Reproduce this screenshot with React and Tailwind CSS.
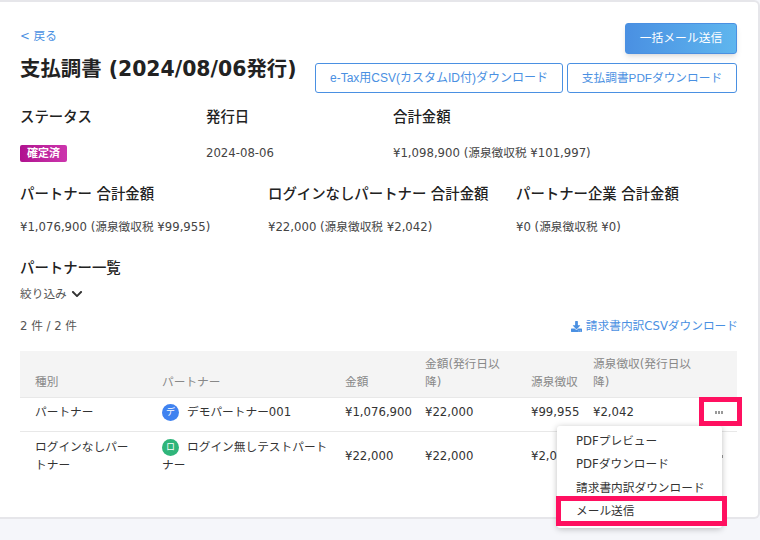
import React from "react";
import { FaChevronDown, FaDownload } from "react-icons/fa";

const font = "font-['DejaVu_Sans','Noto_Sans_CJK_JP',sans-serif]";

const Summary = ({ label, value, className, gap }) => (
  <div className={className}>
    <div className="text-[14.4px] font-medium leading-5 text-[#222]">{label}</div>
    <div className={`${gap} text-[11.7px] leading-5 text-[#444]`}>{value}</div>
  </div>
);

const Dots = () => (
  <div className="flex justify-center gap-px">
    <span className="h-[3px] w-[2px] bg-[#999]" />
    <span className="h-[3px] w-[2px] bg-[#999]" />
    <span className="h-[3px] w-[2px] bg-[#999]" />
  </div>
);

const menuItems = ["PDFプレビュー", "PDFダウンロード", "請求書内訳ダウンロード", "メール送信"];

const App = () => {
  return (
    <div className={`${font} relative h-[540px] w-[760px] overflow-hidden bg-[#f5f6fa]`}>
      <div className="h-[519px] rounded-r-md border-t-2 border-b-2 border-r-2 border-[#e6e6ea] bg-white pl-5 pr-[21px] pt-[21px]">
        <div className="flex items-start justify-between">
          <div>
            <a className="mt-[3px] block text-[11.7px] leading-5 text-[#4a90e2]">&lt; 戻る</a>
            <h1 className="mt-[11px] text-[20.4px] font-bold leading-6 text-[#222]">支払調書 (2024/08/06発行)</h1>
          </div>
          <div className="flex flex-col items-end font-['Liberation_Sans','Noto_Sans_CJK_JP',sans-serif]">
            <button className="h-[31px] w-[112px] rounded-[3px] border border-[#4a90e2] bg-gradient-to-r from-[#4a90e2] to-[#5fb6ee] text-[11.8px] text-white shadow-md">
              一括メール送信
            </button>
            <div className="mt-[9px] flex gap-1">
              <button className="h-[30px] w-[248px] rounded-[3px] border border-[#4a90e2] text-xs text-[#4a90e2]">
                e-Tax用CSV(カスタムID付)ダウンロード
              </button>
              <button className="h-[30px] w-[170px] rounded-[3px] border border-[#4a90e2] text-[11.7px] text-[#4a90e2]">
                支払調書PDFダウンロード
              </button>
            </div>
          </div>
        </div>

        <div className="mt-[14px] flex">
          <Summary gap="mt-[16px]" className="w-[186px]" label="ステータス" value={<span className="inline-block rounded-[2px] bg-gradient-to-r from-[#b0108f] to-[#cc35ad] px-[7px] text-[11px] font-bold leading-[17px] text-white">確定済</span>} />
          <Summary gap="mt-[16px]" className="w-[187px]" label="発行日" value="2024-08-06" />
          <Summary gap="mt-[16px]" label="合計金額" value="¥1,098,900 (源泉徴収税 ¥101,997)" />
        </div>

        <div className="mt-[21px] flex">
          <Summary gap="mt-[13px]" className="w-[248px]" label="パートナー 合計金額" value="¥1,076,900 (源泉徴収税 ¥99,955)" />
          <Summary gap="mt-[13px]" className="w-[248px]" label="ログインなしパートナー 合計金額" value="¥22,000 (源泉徴収税 ¥2,042)" />
          <Summary gap="mt-[13px]" label="パートナー企業 合計金額" value="¥0 (源泉徴収税 ¥0)" />
        </div>

        <div className="mt-[21px] text-[14.4px] font-medium leading-5 text-[#222]">パートナー一覧</div>
        <div className="mt-[6px] flex items-center gap-1 text-[11.7px] leading-5 text-[#555]">
          絞り込み <FaChevronDown className="text-[12px] text-[#333]" />
        </div>

        <div className="mt-[12px] flex items-center justify-between text-[11.7px] leading-5">
          <span className="text-[#555]">2 件 / 2 件</span>
          <a className="-mr-px flex items-center gap-1 text-[#4a90e2]">
            <FaDownload className="text-[11px]" /> 請求書内訳CSVダウンロード
          </a>
        </div>

        <table className="mt-[15px] w-[717px] table-fixed text-left text-[11.7px]">
          <colgroup>
            <col className="w-[128px]" />
            <col className="w-[183px]" />
            <col className="w-[80px]" />
            <col className="w-[106px]" />
            <col className="w-[62px]" />
            <col className="w-[121px]" />
            <col className="w-[37px]" />
          </colgroup>
          <thead className="bg-[#f4f4f4] text-[#888]">
            <tr className="h-[46px] align-bottom leading-[18px]">
              <th className="pb-[6px] pl-[15px] font-normal">種別</th>
              <th className="pb-[6px] pl-[14px] font-normal">パートナー</th>
              <th className="pb-[6px] pl-[14px] font-normal">金額</th>
              <th className="pb-[6px] pl-[14px] pr-2 font-normal">金額(発行日以降)</th>
              <th className="pb-[6px] pl-[14px] font-normal whitespace-nowrap">源泉徴収</th>
              <th className="pb-[6px] pl-[14px] pr-2 font-normal">源泉徴収(発行日以降)</th>
              <th></th>
            </tr>
          </thead>
          <tbody className="leading-[18px] text-[#333]">
            <tr className="h-[34px] border-t border-[#e8e8e8]">
              <td className="pb-[4px] pl-[15px]">パートナー</td>
              <td className="pb-[4px] pl-[14px]">
                <span className="mr-2 inline-flex h-[17px] w-[17px] items-center justify-center rounded-full bg-[#3f82f0] align-middle text-[9px] leading-none text-white">デ</span>
                デモパートナー001
              </td>
              <td className="pb-[4px] pl-[14px] whitespace-nowrap">¥1,076,900</td>
              <td className="pb-[4px] pl-[14px]">¥22,000</td>
              <td className="pb-[4px] pl-[14px]">¥99,955</td>
              <td className="pb-[4px] pl-[14px]">¥2,042</td>
              <td className="pb-[4px]">
                <Dots />
              </td>
            </tr>
            <tr className="h-[50px] border-t border-[#e8e8e8]">
              <td className="pl-[15px] pr-2">ログインなしパートナー</td>
              <td className="pl-[14px] pr-[3px]">
                <span className="mr-2 inline-flex h-[17px] w-[17px] items-center justify-center rounded-full bg-[#2fb57a] align-middle text-[9px] leading-none text-white">ロ</span>
                ログイン無しテストパートナー
              </td>
              <td className="pl-[14px]">¥22,000</td>
              <td className="pl-[14px]">¥22,000</td>
              <td className="pl-[14px]">¥2,042</td>
              <td className="pl-[14px]">¥2,042</td>
              <td>
                <Dots />
              </td>
            </tr>
          </tbody>
        </table>
      </div>

      {/* popup menu */}
      <ul className="absolute left-[557px] top-[426px] h-[102px] w-[165px] rounded-[3px] bg-white py-[4px] pl-[19px] text-[11.7px] leading-[23.3px] text-[#333] shadow-[0_1px_6px_rgba(0,0,0,0.25)]">
        {menuItems.map((item) => (
          <li key={item}>{item}</li>
        ))}
      </ul>

      {/* annotation boxes */}
      <div className="absolute left-[699px] top-[397px] h-[29px] w-[43px] border-[5px] border-[#ff1060]" />
      <div className="absolute left-[556px] top-[496px] h-[30px] w-[171px] border-[5px] border-[#ff1060]" />
    </div>
  );
};

export default App;
